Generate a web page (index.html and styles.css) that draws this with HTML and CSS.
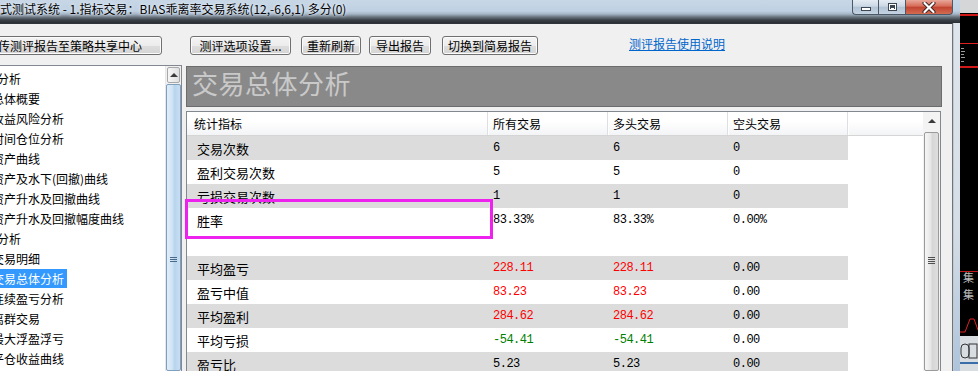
FILE: index.html
```html
<!DOCTYPE html>
<html lang="zh-CN">
<head>
<meta charset="utf-8">
<title>测评报告</title>
<link rel="stylesheet" href="styles.css">
</head>
<body>
<div class="screen">
  <div class="win">
    <div class="titlebar">
      <span class="title">公式测试系统 - 1.指标交易：BIAS乖离率交易系统(12,-6,6,1) 多分(0)</span>
      <div class="caption">
        <span class="cbtn min"><i class="min-bar"></i></span>
        <span class="cbtn max"><i class="max-box"></i></span>
        <span class="cbtn close">
          <svg width="14" height="11" viewBox="0 0 14 11"><path d="M2.5 1 L11.5 10 M11.5 1 L2.5 10" stroke="#3a2020" stroke-width="4" stroke-linecap="round"/><path d="M2.5 1 L11.5 10 M11.5 1 L2.5 10" stroke="#ffffff" stroke-width="2.2" stroke-linecap="round"/></svg>
        </span>
      </div>
    </div>
    <div class="winbody">
      <div class="client">
        <div class="toolbar">
          <span class="btn b-upload">上传测评报告至策略共享中心</span>
          <span class="btn b-opt">测评选项设置...</span>
          <span class="btn b-refresh">重新刷新</span>
          <span class="btn b-export">导出报告</span>
          <span class="btn b-simple">切换到简易报告</span>
          <a class="help-link" href="#">测评报告使用说明</a>
        </div>
        <div class="main">
          <div class="tree">
            <ul class="tree-list">
              <li class="node parent"><span>绩效分析</span></li>
              <li class="node"><span>总体概要</span></li>
              <li class="node"><span>收益风险分析</span></li>
              <li class="node"><span>时间仓位分析</span></li>
              <li class="node"><span>资产曲线</span></li>
              <li class="node"><span>资产及水下(回撤)曲线</span></li>
              <li class="node"><span>资产升水及回撤曲线</span></li>
              <li class="node"><span>资产升水及回撤幅度曲线</span></li>
              <li class="node parent"><span>交易分析</span></li>
              <li class="node"><span>交易明细</span></li>
              <li class="node selected"><span>交易总体分析</span></li>
              <li class="node"><span>连续盈亏分析</span></li>
              <li class="node"><span>离群交易</span></li>
              <li class="node"><span>最大浮盈浮亏</span></li>
              <li class="node"><span>平仓收益曲线</span></li>
            </ul>
            <div class="vscroll blue">
              <div class="sb-up"><i class="arrow"></i></div>
              <div class="sb-thumb"><span class="grip g-tree"></span></div>
            </div>
          </div>
          <div class="report">
            <div class="report-head">交易总体分析</div>
            <div class="listview">
              <div class="lv-main">
                <div class="lv-header">
                  <span class="hc h1">统计指标</span>
                  <span class="hc">所有交易</span>
                  <span class="hc">多头交易</span>
                  <span class="hc">空头交易</span>
                </div>
                <div class="row gray"><span class="c1">交易次数</span><span class="c">6</span><span class="c">6</span><span class="c">0</span></div>
                <div class="row"><span class="c1">盈利交易次数</span><span class="c">5</span><span class="c">5</span><span class="c">0</span></div>
                <div class="row gray"><span class="c1">亏损交易次数</span><span class="c">1</span><span class="c">1</span><span class="c">0</span></div>
                <div class="row"><span class="c1">胜率</span><span class="c">83.33%</span><span class="c">83.33%</span><span class="c">0.00%</span></div>
                <div class="row"></div>
                <div class="row gray"><span class="c1">平均盈亏</span><span class="c up">228.11</span><span class="c up">228.11</span><span class="c">0.00</span></div>
                <div class="row"><span class="c1">盈亏中值</span><span class="c up">83.23</span><span class="c up">83.23</span><span class="c">0.00</span></div>
                <div class="row gray"><span class="c1">平均盈利</span><span class="c up">284.62</span><span class="c up">284.62</span><span class="c">0.00</span></div>
                <div class="row"><span class="c1">平均亏损</span><span class="c down">-54.41</span><span class="c down">-54.41</span><span class="c">0.00</span></div>
                <div class="row gray"><span class="c1">盈亏比</span><span class="c">5.23</span><span class="c">5.23</span><span class="c">0.00</span></div>
              </div>
              <div class="vscroll grayish">
                <div class="sb-up tall"><i class="arrow"></i></div>
                <div class="sb-thumb"><span class="grip g-list"></span></div>
              </div>
            </div>
          </div>
        </div>
      </div>
      <div class="frame-r"></div>
    </div>
  </div>
  <div class="desktop">
    <svg width="18" height="371" viewBox="0 0 18 371">
      <rect x="0" y="0" width="18" height="13" fill="#d4d6d8"/>
      <rect x="0" y="14" width="18" height="2" fill="#d01818"/>
      <rect x="0" y="43" width="18" height="1" fill="#e02020"/>
      <rect x="0" y="66" width="18" height="2" fill="#d01818"/>
      <rect x="1" y="48" width="3" height="1" fill="#9a9a9a"/>
      <rect x="1" y="51" width="4" height="1" fill="#9a9a9a"/>
      <rect x="1" y="54" width="3" height="1" fill="#9a9a9a"/>
      <rect x="1" y="57" width="4" height="1" fill="#9a9a9a"/>
      <rect x="1" y="61" width="3" height="1" fill="#9a9a9a"/>
      <rect x="0" y="271" width="18" height="1" fill="#c01818"/>
      <text x="3" y="282" font-size="11" fill="#bdbdbd" font-family="Noto Sans CJK SC, sans-serif">集</text>
      <text x="3" y="299" font-size="11" fill="#bdbdbd" font-family="Noto Sans CJK SC, sans-serif">集</text>
      <path d="M0 332 L5 332 L10 319 L14 319 L18 330" stroke="#e02020" stroke-width="1" fill="none"/>
      <rect x="0" y="336" width="18" height="35" fill="#d8dde2"/>
      <rect x="1" y="344" width="8" height="14" rx="4" fill="none" stroke="#333" stroke-width="1"/>
      <rect x="9" y="344" width="8" height="14" fill="none" stroke="#333" stroke-width="1"/>
      <rect x="0" y="362" width="18" height="2" fill="#3a6ea8"/>
    </svg>
  </div>
  <div class="mark"></div>
</div>
</body>
</html>
```

FILE: styles.css
```css
* { box-sizing: border-box; }
html, body { margin: 0; padding: 0; }
body {
  width: 978px;
  height: 371px;
  overflow: hidden;
  background: #000;
  font-family: "Noto Sans CJK SC", "Liberation Sans", sans-serif;
  font-size: 12px;
  color: #000;
}
.screen { position: relative; display: flex; width: 978px; height: 371px; }

/* window */
.win { flex: none; width: 960px; display: flex; flex-direction: column; }
.titlebar {
  flex: none;
  height: 23px;
  display: flex;
  align-items: flex-start;
  background: linear-gradient(to bottom, #c8d7e6 0, #bed0e2 11px, #a6b6c6 14px, #6a7480 17px, #3b4148 20px, #2a2e34 23px);
}
.title {
  margin-left: -12px;
  line-height: 17px;
  white-space: nowrap;
  font-size: 12px;
  text-shadow: 0 0 4px #e6eef7, 0 0 2px #e6eef7;
}
.caption { margin-left: auto; margin-right: 7px; display: flex; height: 15px; }
.cbtn {
  height: 15px;
  border: 1px solid #4c5866;
  border-top: none;
  display: flex;
  align-items: center;
  justify-content: center;
}
.cbtn.min, .cbtn.max {
  background: linear-gradient(to bottom, #e4ebf3 0, #cbd8e5 45%, #b2c3d4 50%, #c4d3e2 100%);
  border-right: none;
}
.cbtn.min { width: 26px; border-bottom-left-radius: 4px; }
.cbtn.max { width: 27px; }
.cbtn.close {
  width: 48px;
  border-bottom-right-radius: 4px;
  background: linear-gradient(to bottom, #e8a89a 0, #d66a56 45%, #c0422e 50%, #d46c52 100%);
}
.min-bar { display: block; width: 10px; height: 4px; margin-top: 4px; background: #fff; border: 1px solid #3c4654; }
.max-box { display: block; width: 9px; height: 8px; background: #fff; border: 1px solid #3c4654; box-shadow: inset 0 0 0 1px #fff, inset 0 2px 0 2px #3c4654; }

.winbody { flex: 1; display: flex; min-height: 0; }
.client {
  width: 953px;
  display: flex;
  flex-direction: column;
  background: #f0f0f0;
  border-top: 1px solid #30343a;
  border-right: 1px solid #6e747a;
}
.frame-r { flex: 1; background: linear-gradient(to bottom, #dfe5ec 0, #d4dde6 60%, #aec4da 100%); border-left: 1px solid #c0c8d0; }

/* toolbar */
.toolbar { flex: none; height: 39px; padding-top: 12px; display: flex; align-items: flex-start; }
.btn {
  height: 19px;
  display: flex;
  align-items: center;
  justify-content: center;
  white-space: nowrap;
  font-size: 12px;
  border: 1px solid #707070;
  border-radius: 3px;
  background: linear-gradient(to bottom, #f4f4f4 0, #ececec 50%, #dedede 51%, #d4d4d4 100%);
  box-shadow: inset 0 0 0 1px #fbfbfb;
}
.b-upload { width: 196px; margin-left: -34px; }
.b-opt { width: 101px; margin-left: 28px; }
.b-refresh { width: 60px; margin-left: 10px; }
.b-export { width: 62px; margin-left: 8px; }
.b-simple { width: 96px; margin-left: 11px; }
.help-link {
  margin-left: 91px;
  margin-top: 1px;
  color: #0066cc;
  font-size: 12px;
  line-height: 14px;
  text-decoration: underline;
  white-space: nowrap;
}

/* main split */
.main { flex: 1; display: flex; min-height: 0; }
.tree {
  flex: none;
  width: 182px;
  margin-top: 2px;
  display: flex;
  background: #fff;
  border-top: 1px solid #828790;
  border-right: 1px solid #828790;
}
.tree-list {
  flex: 1;
  list-style: none;
  margin: 0;
  padding: 2px 0 0 0;
  overflow: hidden;
}
.node {
  height: 20px;
  display: flex;
  align-items: center;
  white-space: nowrap;
  margin-left: -11px;
  font-size: 12px;
}
.node.parent { margin-left: -30px; }
.node span { padding: 0 3px; line-height: 19px; }
.node.selected span { background: #3399ff; color: #fff; }

/* scrollbars */
.vscroll { flex: none; display: flex; flex-direction: column; background: #f0f0f0; }
.tree .vscroll { width: 16px; padding-top: 1px; border-left: 1px solid #e8e8e8; }
.listview .vscroll { width: 17px; background: #f3f3f3; }
.sb-up {
  height: 16px;
  margin: 0 1px;
  display: flex;
  align-items: center;
  justify-content: center;
  border: 1px solid #a8a8a8;
  border-radius: 2px;
  background: linear-gradient(to right, #f6f6f6, #e0e0e0);
}
.sb-up.tall { height: 18px; border-color: transparent; background: transparent; }
.arrow {
  display: block;
  width: 0; height: 0;
  border-left: 4px solid transparent;
  border-right: 4px solid transparent;
  border-bottom: 4px solid #3a3a3a;
}
.sb-thumb {
  flex: 1;
  margin: 1px 0 0 0;
  border: 1px solid #8aa8c4;
  border-radius: 2px;
  display: flex;
  flex-direction: column;
  align-items: center;
}
.blue .sb-thumb { background: linear-gradient(to right, #e2eef9 0, #cde2f4 45%, #b7d4ee 55%, #c7def2 100%); border-color: #7f9fbe; }
.grayish .sb-thumb { margin: 2px 1px 0 1px; background: linear-gradient(to right, #f6f6f6 0, #e6e6e6 45%, #d6d6d6 55%, #dedede 100%); border-color: #9a9a9a; }
.grip {
  width: 7px;
  height: 6px;
  background: repeating-linear-gradient(to bottom, #4a6a88 0, #4a6a88 1px, transparent 1px, transparent 2px);
}
.g-tree { margin-top: 172px; }
.g-list { margin-top: 124px; background: repeating-linear-gradient(to bottom, #505050 0, #505050 1px, transparent 1px, transparent 2px); height: 7px; }

/* report */
.report {
  flex: 1;
  min-width: 0;
  margin-left: 4px;
  display: flex;
  flex-direction: column;
}
.report-head {
  flex: none;
  height: 41px;
  margin: 3px 10px 0 0;
  padding: 1px 0 0 5px;
  background: #898989;
  border: 1px solid #6c6c6c;
  color: #c9c9c9;
  font-size: 26px;
  font-weight: 400;
  line-height: 30px;
  letter-spacing: 0.5px;
}
.listview {
  flex: 1;
  min-height: 0;
  margin: 4px 11px 0 0;
  display: flex;
  background: #fff;
  border: 1px solid #828790;
  border-bottom: none;
}
.lv-main { flex: 1; min-width: 0; }
.lv-header {
  height: 24px;
  display: flex;
  background: linear-gradient(to bottom, #ffffff 0, #ffffff 40%, #f3f4f6 100%);
  border-bottom: 1px solid #d5d5d5;
}
.hc {
  width: 120px;
  padding-left: 5px;
  display: flex;
  align-items: center;
  font-size: 12px;
  border-right: 1px solid #dedfe2;
  box-shadow: 1px 0 0 #ffffff;
}
.hc.h1 { width: 301px; padding-left: 7px; }
.row { width: 661px; height: 24px; display: flex; align-items: center; }
.row.gray { background: #dcdcdc; }
.c1 { width: 301px; padding-left: 10px; font-size: 13px; }
.c {
  width: 120px;
  padding-left: 5px;
  font-family: "Liberation Mono", "DejaVu Sans Mono", monospace;
  font-size: 12px;
  letter-spacing: -0.5px;
}
.c.up { color: #ff0000; }
.c.down { color: #008000; }

/* desktop strip */
.desktop { flex: 1; display: flex; background: #000; }
.desktop svg { display: block; }

/* annotation overlay */
.mark {
  position: absolute;
  left: 185px;
  top: 199px;
  width: 308px;
  height: 40px;
  border: 3px solid #ee22ee;
}
```
